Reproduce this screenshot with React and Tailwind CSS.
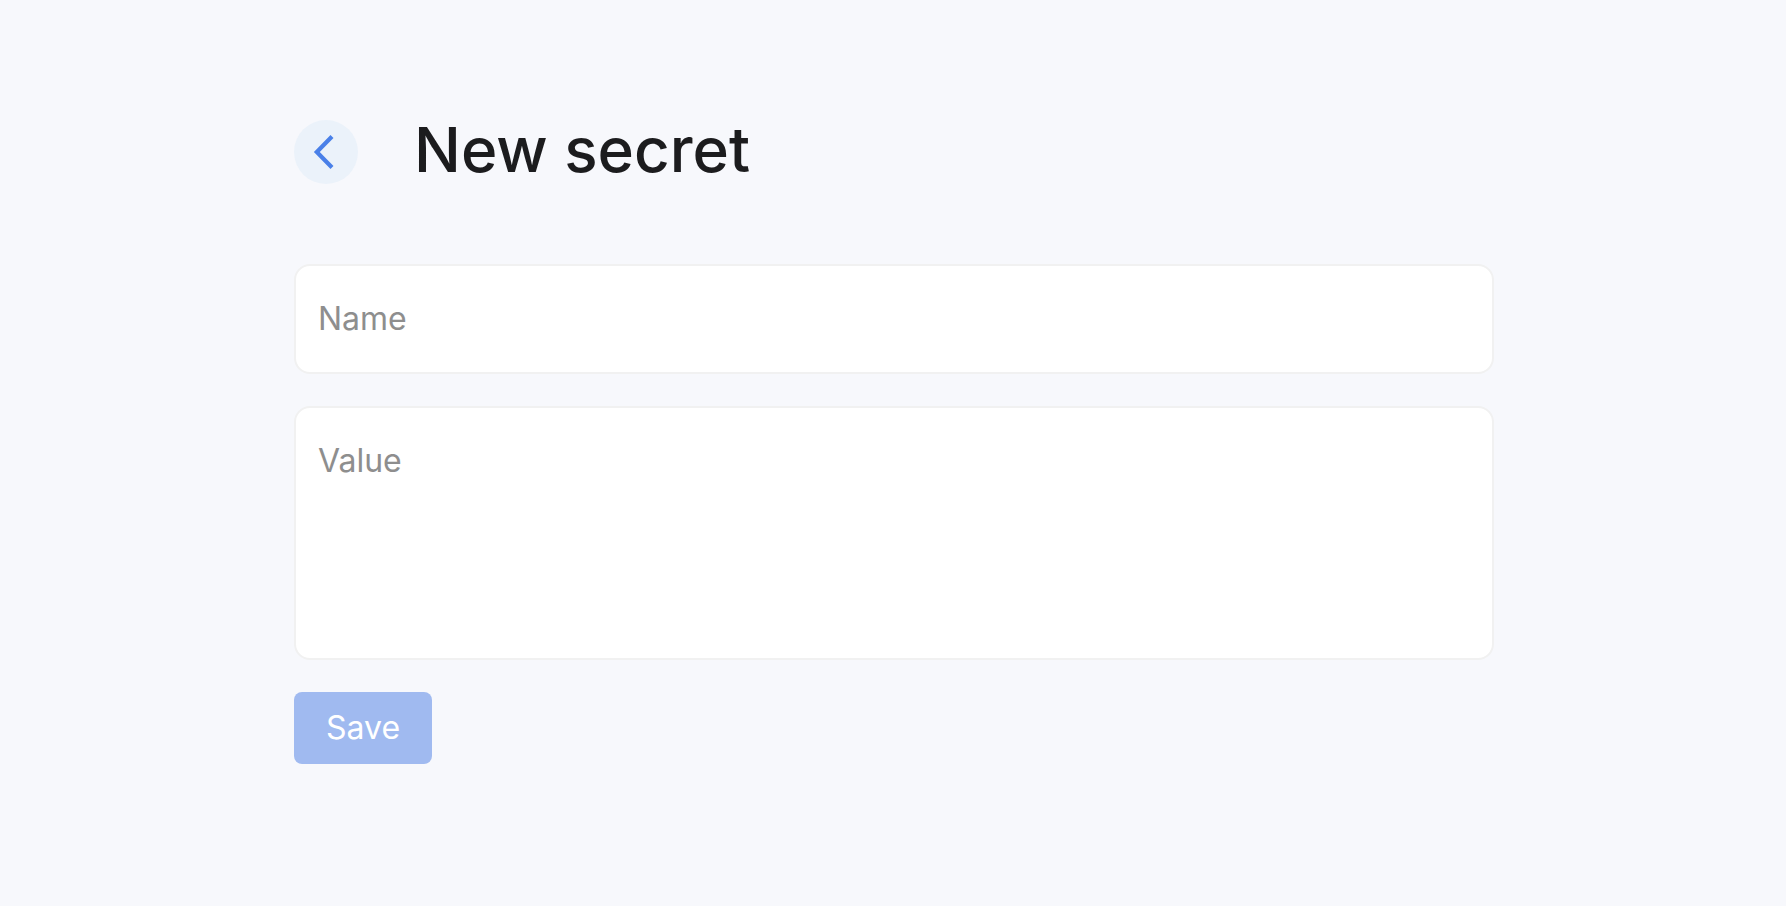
import React, { useState } from 'react';

const fieldClass =
  'block w-full resize-none rounded-2xl border-2 border-[#f1f1f1] bg-white px-[22px] py-[33px] text-[32px] leading-[40px] text-[#1c1c1e] placeholder:text-[#8e8e8e] outline-none focus:border-[#4a7fe8]';

function BackButton() {
  return (
    <button type="button" aria-label="Back" className="size-16 shrink-0 rounded-full bg-[#ebf2fa]">
      <svg viewBox="0 0 64 64" fill="none" className="size-16">
        <path d="M38 16.6 L22.8 32 L38 47.4" stroke="#4a80e8" strokeWidth="4.2" />
      </svg>
    </button>
  );
}

function App() {
  const [name, setName] = useState('');
  const [value, setValue] = useState('');

  return (
    <div className="min-h-screen bg-[#f7f8fc] pt-28 pb-16 pl-0.5 font-['Inter',sans-serif]">
      <main className="mx-auto max-w-[1200px]">
        {/* Header */}
        <header className="mb-[72px] flex items-center gap-14">
          <BackButton />
          <h1 className="pb-1 text-[62px] leading-[76px] font-medium text-[#1c1c1e]">New secret</h1>
        </header>

        {/* Secret form */}
        <form className="flex flex-col items-start gap-8" onSubmit={(e) => e.preventDefault()}>
          <input
            type="text"
            aria-label="Name"
            placeholder="Name"
            value={name}
            onChange={(e) => setName(e.target.value)}
            className={fieldClass}
          />
          <textarea
            aria-label="Value"
            placeholder="Value"
            value={value}
            onChange={(e) => setValue(e.target.value)}
            className={`${fieldClass} h-[254px]`}
          />
          <button
            type="submit"
            disabled={!name || !value}
            className="rounded-lg bg-[#4a80e8] px-8 py-4 text-[32px] leading-[40px] text-white disabled:bg-[#a0baf0]"
          >
            Save
          </button>
        </form>
      </main>
    </div>
  );
}

export default App;
